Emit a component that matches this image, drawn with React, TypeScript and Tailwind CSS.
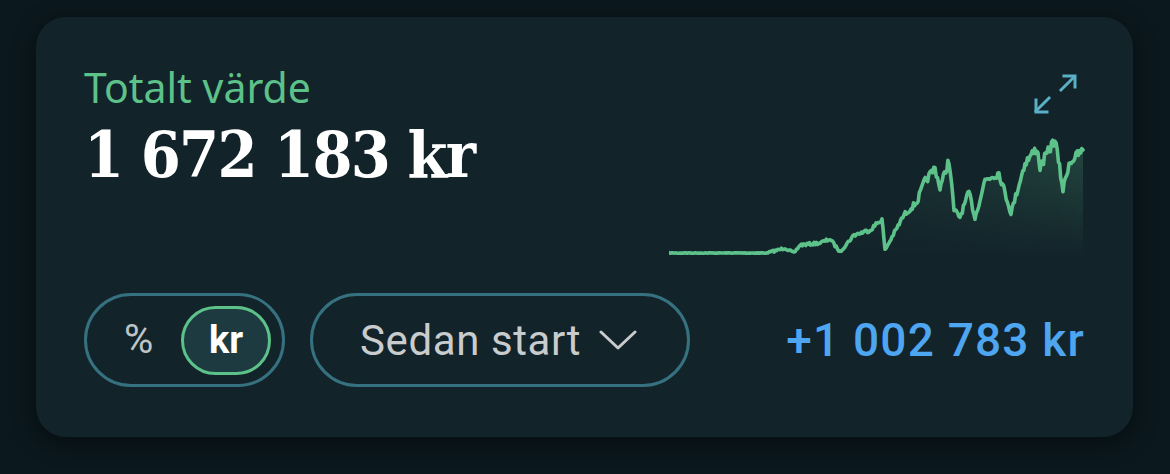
import React from 'react';

// keypoints of the sparkline, in svg coords (svg is 416x130)
const KEYS: [number, number][] = [
    [0, 123], [98, 123], [116, 118], [125, 123], [131, 115], [151, 113], [161, 109],
    [171, 122], [185, 105], [201, 100], [213, 89], [216, 120], [235, 85], [248, 72],
    [255, 53], [266, 38], [271, 58], [280, 30], [285, 80], [291, 87], [300, 62],
    [306, 88], [316, 50], [330, 43], [342, 83], [356, 33], [368, 18], [371, 37],
    [386, 9], [394, 60], [400, 33], [414, 20],
];

function buildPoints() {
    let seed = 7;
    const rnd = () => {
        seed = (seed * 16807) % 2147483647;
        return seed / 2147483647 - 0.5;
    };
    const pts: [number, number][] = [];
    for (let i = 0; i < KEYS.length - 1; i++) {
        const [x0, y0] = KEYS[i];
        const [x1, y1] = KEYS[i + 1];
        const steps = Math.max(1, Math.round((x1 - x0) / 1.2));
        for (let s = 0; s < steps; s++) {
            const t = s / steps;
            const x = x0 + (x1 - x0) * t;
            const y = y0 + (y1 - y0) * t;
            const amp = x < 100 ? 0.6 : 2 + (123 - y) * 0.08;
            pts.push([x, y + rnd() * amp]);
        }
    }
    pts.push(KEYS[KEYS.length - 1]);
    return pts;
}

function Sparkline() {
    const pts = buildPoints();
    const line = pts.map(([x, y], i) => `${i ? 'L' : 'M'}${x.toFixed(1)} ${y.toFixed(1)}`).join(' ');
    const area = `${line} L414 130 L0 130 Z`;
    return (
        <svg width="416" height="130" viewBox="0 0 416 130" className="block">
            <defs>
                <linearGradient id="fillg" x1="0" y1="0" x2="0" y2="1">
                    <stop offset="0%" stopColor="#5cc28a" stopOpacity="0.24" />
                    <stop offset="100%" stopColor="#5cc28a" stopOpacity="0" />
                </linearGradient>
                <linearGradient id="fadex" x1="0" y1="0" x2="1" y2="0">
                    <stop offset="0%" stopColor="#fff" stopOpacity="0" />
                    <stop offset="55%" stopColor="#fff" stopOpacity="0.4" />
                    <stop offset="100%" stopColor="#fff" stopOpacity="1" />
                </linearGradient>
                <mask id="m">
                    <rect width="416" height="130" fill="url(#fadex)" />
                </mask>
            </defs>
            <path d={area} fill="url(#fillg)" mask="url(#m)" />
            <path d={line} fill="none" stroke="#5cc28a" strokeWidth="3.6" strokeLinejoin="round" strokeLinecap="round" />
        </svg>
    );
}

function ExpandIcon() {
    return (
        <svg width="46" height="44" viewBox="0 0 46 44" fill="none" stroke="#5ab0c6" strokeWidth="3" strokeLinecap="square">
            <path d="M28 18 L41 5" />
            <path d="M31 4 H42 V15" />
            <path d="M16 26 L3 39" />
            <path d="M3 28 V40 H14" />
        </svg>
    );
}

export default function App() {
    return (
        <div className="w-[1170px] h-[474px] bg-[#0b181d] pt-[17px] pl-[36px]">
            <div
                className="w-[1097px] h-[420px] rounded-[30px] bg-[#13232a] shadow-[0_6px_24px_rgba(0,0,0,0.45)] px-[48px] flex flex-col"
                style={{ fontFamily: 'Roboto, "Noto Sans", sans-serif' }}
            >
                <div className="flex justify-between">
                    <div className="pt-[46px]">
                        <div
                            className="text-[41px] leading-[48px] text-[#5cc28a]"
                            style={{ fontFamily: '"Noto Sans", sans-serif' }}
                        >
                            Totalt värde
                        </div>
                        <div
                            className="mt-[4px] text-[64px] leading-[80px] font-bold text-white tracking-[-1.7px]"
                            style={{ fontFamily: '"DejaVu Serif Condensed", "DejaVu Serif", serif' }}
                        >
                            1 672 183 kr
                        </div>
                    </div>
                    <div className="w-[416px] flex flex-col items-end pt-[55px]">
                        <div className="mr-[6px] mb-[14px]">
                            <ExpandIcon />
                        </div>
                        <Sparkline />
                    </div>
                </div>
                <div className="flex items-center mt-[33px]">
                    <div className="w-[201px] h-[94px] rounded-full border-[3px] border-[#35717f] flex items-center pl-[37px] pr-[11px] justify-between">
                        <span className="text-[40px] text-[#bfc4c6]">%</span>
                        <span className="w-[90px] h-[69px] rounded-full border-[3px] border-[#5cc28a] bg-[#1c3a40] flex items-center justify-center text-[38px] font-bold text-white">
                            kr
                        </span>
                    </div>
                    <div className="ml-[25px] w-[380px] h-[94px] rounded-full border-[3px] border-[#35717f] flex items-center pl-[47px] gap-[18px]">
                        <span className="text-[42px] tracking-[0.6px] text-[#c9cccd]">Sedan start</span>
                        <svg width="38" height="22" viewBox="0 0 38 22" fill="none" stroke="#c9cccd" strokeWidth="3" strokeLinecap="round" strokeLinejoin="round">
                            <path d="M2 3 L19 19 L36 3" />
                        </svg>
                    </div>
                    <span className="ml-auto text-[46px] tracking-[1.2px] font-medium text-[#4ea5f0]">+1 002 783 kr</span>
                </div>
            </div>
        </div>
    );
}
